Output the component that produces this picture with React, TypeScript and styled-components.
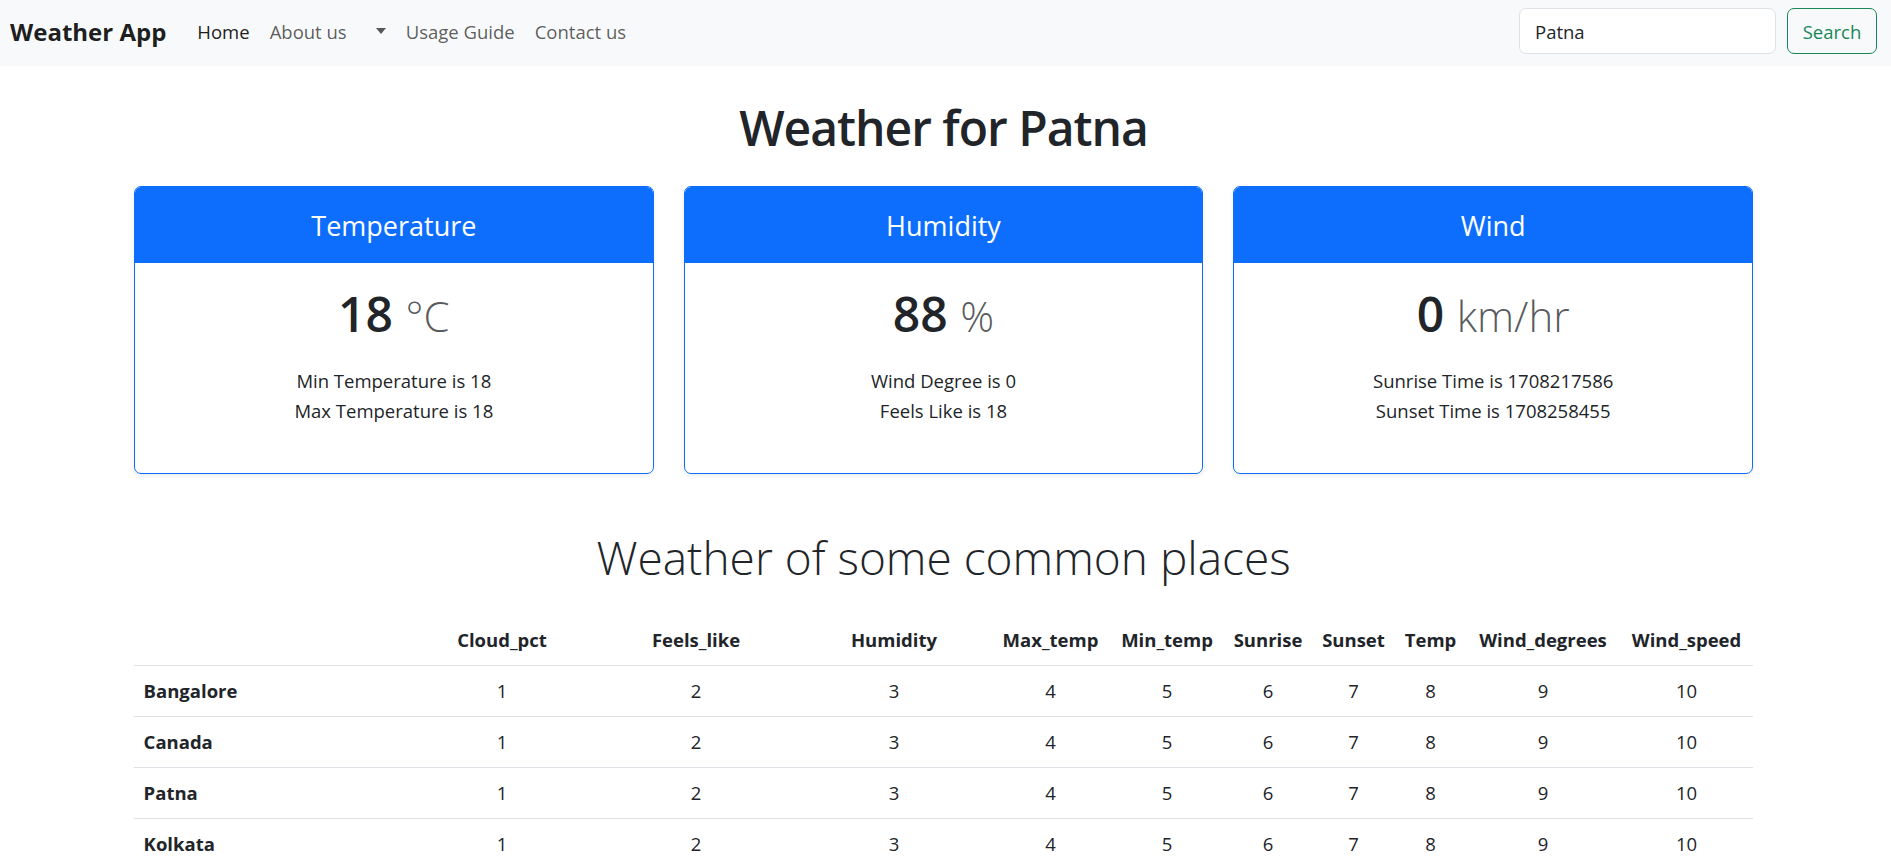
import React from 'react';
import styled, { createGlobalStyle } from 'styled-components';

const GlobalStyle = createGlobalStyle`
  body {
    margin: 0;
    font-family: 'Open Sans', 'Noto Sans', sans-serif;
    font-size: 18.5px;
    color: #212529;
    background: #fff;
  }
  * {
    box-sizing: border-box;
  }
`;

const NavBar = styled.nav`
  display: flex;
  align-items: center;
  height: 66px;
  padding: 0 14px 4px 10px;
  background: #f8f9fa;
`;

const Brand = styled.a`
  font-size: 24px;
  font-weight: 700;
  color: rgba(0, 0, 0, 0.9);
  text-decoration: none;
  margin-right: 21px;
`;

const NavList = styled.ul`
  display: flex;
  align-items: center;
  list-style: none;
  margin: 0;
  padding: 0;
`;

const NavLink = styled.a<{ $active?: boolean }>`
  display: flex;
  align-items: center;
  padding: 0 10px;
  line-height: 29px;
  color: ${(p) => (p.$active ? 'rgba(0, 0, 0, 0.9)' : 'rgba(0, 0, 0, 0.65)')};
  text-decoration: none;
`;

const Caret = styled.span`
  display: inline-block;
  margin-left: 9px;
  border-top: 6px solid rgba(0, 0, 0, 0.65);
  border-left: 5.5px solid transparent;
  border-right: 5.5px solid transparent;
`;

const SearchForm = styled.form`
  display: flex;
  gap: 11px;
  margin-left: auto;
`;

const SearchInput = styled.input`
  width: 257px;
  height: 46px;
  padding: 0 15px;
  font: inherit;
  color: #212529;
  background: #fff;
  border: 1px solid #dee2e6;
  border-radius: 7px;
  outline: none;
`;

const SearchButton = styled.button`
  width: 90px;
  height: 46px;
  font: inherit;
  color: #198754;
  background: transparent;
  border: 1px solid #198754;
  border-radius: 7px;
`;

const Main = styled.main`
  padding: 0 138px 0 134px;
`;

const PageTitle = styled.h1`
  margin: 33px 0 0;
  font-size: 48px;
  font-weight: 600;
  line-height: 58px;
  letter-spacing: -1px;
  text-align: center;
`;

const CardGrid = styled.div`
  display: grid;
  grid-template-columns: repeat(3, 1fr);
  gap: 30px;
  margin-top: 29px;
`;

const Card = styled.section`
  display: flex;
  flex-direction: column;
  height: 288px;
  border: 1px solid #0d6efd;
  border-radius: 7px;
  overflow: hidden;
  box-shadow: 0 2px 5px rgba(0, 0, 0, 0.075);
  text-align: center;
`;

const CardHeader = styled.h4`
  display: flex;
  align-items: center;
  justify-content: center;
  height: 76px;
  margin: 0;
  font-size: 27px;
  font-weight: 400;
  color: #fff;
  background: #0d6efd;
`;

const CardBody = styled.div`
  padding: 22px 19px 0;
`;

const Reading = styled.div`
  font-size: 48px;
  font-weight: 600;
  line-height: 58px;
`;

const Unit = styled.small`
  font-size: 42px;
  font-weight: 300;
  color: rgba(33, 37, 41, 0.75);
`;

const Details = styled.ul`
  list-style: none;
  margin: 21px 0 0;
  padding: 0;
  line-height: 30px;
`;

const SectionTitle = styled.h2`
  margin: 55px 0 0;
  font-size: 46px;
  font-weight: 300;
  line-height: 56px;
  text-align: center;
`;

const Table = styled.table`
  width: 100%;
  margin-top: 30px;
  border-collapse: collapse;
  table-layout: fixed;
`;

const Cell = styled.td<{ $head?: boolean }>`
  padding: 10px 9.6px;
  line-height: 30px;
  border-bottom: 1px solid #dee2e6;
  font-weight: ${(p) => (p.$head ? 700 : 400)};
  text-align: center;
  white-space: nowrap;
`;

const RowHead = styled(Cell)`
  text-align: left;
`;

const columns = [
  { label: '', width: 275 },
  { label: 'Cloud_pct', width: 186 },
  { label: 'Feels_like', width: 202 },
  { label: 'Humidity', width: 194 },
  { label: 'Max_temp', width: 119 },
  { label: 'Min_temp', width: 114 },
  { label: 'Sunrise', width: 88 },
  { label: 'Sunset', width: 83 },
  { label: 'Temp', width: 71 },
  { label: 'Wind_degrees', width: 154 },
  { label: 'Wind_speed', width: 133 },
];

const places = ['Bangalore', 'Canada', 'Patna', 'Kolkata'];

const cards = [
  { title: 'Temperature', value: '18', unit: '°C', lines: ['Min Temperature is 18', 'Max Temperature is 18'] },
  { title: 'Humidity', value: '88', unit: '%', lines: ['Wind Degree is 0', 'Feels Like is 18'] },
  { title: 'Wind', value: '0', unit: 'km/hr', lines: ['Sunrise Time is 1708217586', 'Sunset Time is 1708258455'] },
];

const App: React.FC = () => (
  <>
    <GlobalStyle />
    <NavBar>
      <Brand href="#">Weather App</Brand>
      <NavList>
        <li><NavLink $active href="#">Home</NavLink></li>
        <li><NavLink href="#">About us</NavLink></li>
        <li><NavLink href="#"><Caret /></NavLink></li>
        <li><NavLink href="#">Usage Guide</NavLink></li>
        <li><NavLink href="#">Contact us</NavLink></li>
      </NavList>
      <SearchForm onSubmit={(e) => e.preventDefault()}>
        <SearchInput type="search" defaultValue="Patna" />
        <SearchButton type="submit">Search</SearchButton>
      </SearchForm>
    </NavBar>
    <Main>
      <PageTitle>Weather for Patna</PageTitle>
      <CardGrid>
        {cards.map((c) => (
          <Card key={c.title}>
            <CardHeader>{c.title}</CardHeader>
            <CardBody>
              <Reading>
                {c.value} <Unit>{c.unit}</Unit>
              </Reading>
              <Details>
                {c.lines.map((l) => (
                  <li key={l}>{l}</li>
                ))}
              </Details>
            </CardBody>
          </Card>
        ))}
      </CardGrid>
      <SectionTitle>Weather of some common places</SectionTitle>
      <Table>
        <colgroup>
          {columns.map((col, i) => (
            <col key={i} style={{ width: col.width }} />
          ))}
        </colgroup>
        <thead>
          <tr>
            {columns.map((col, i) => (
              <Cell as="th" $head key={i}>
                {col.label}
              </Cell>
            ))}
          </tr>
        </thead>
        <tbody>
          {places.map((place) => (
            <tr key={place}>
              <RowHead as="th" $head>
                {place}
              </RowHead>
              {columns.slice(1).map((_, i) => (
                <Cell key={i}>{i + 1}</Cell>
              ))}
            </tr>
          ))}
        </tbody>
      </Table>
    </Main>
  </>
);

export default App;
